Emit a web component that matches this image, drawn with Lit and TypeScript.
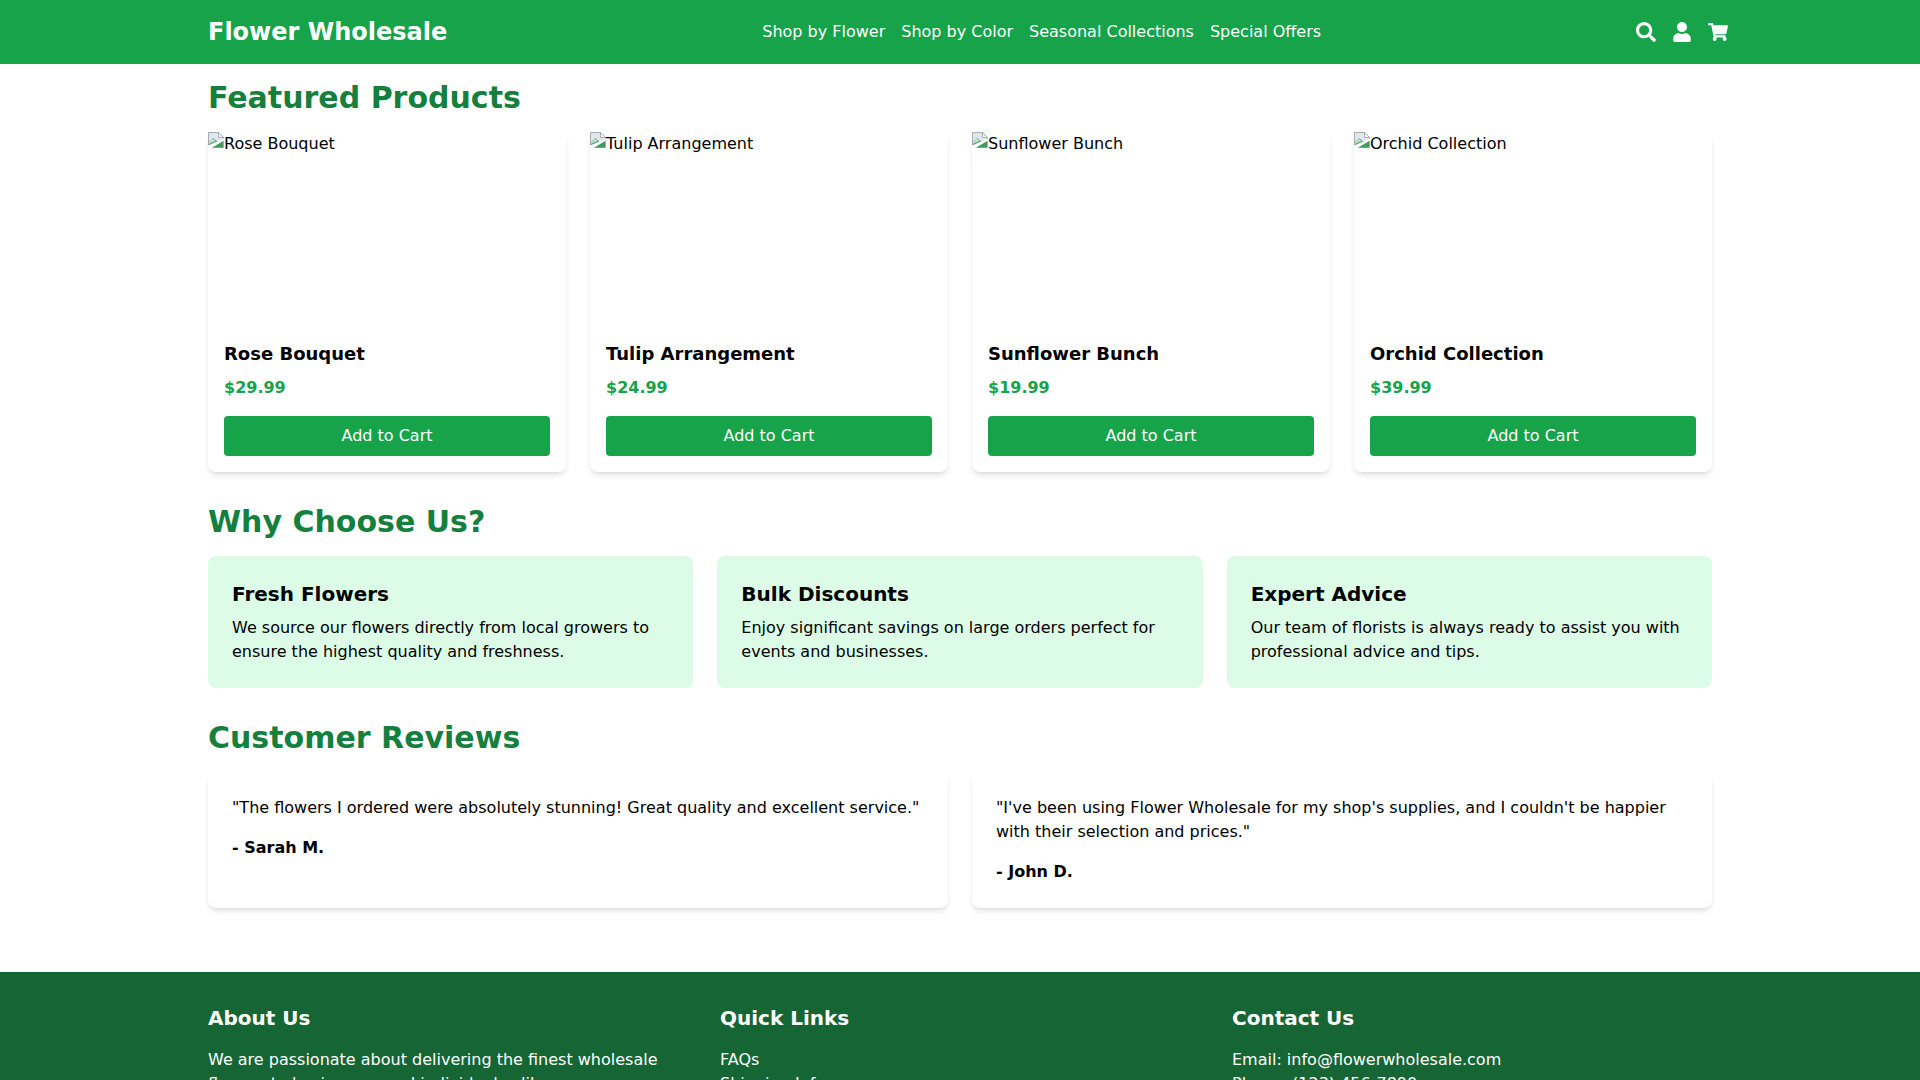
import { LitElement, html, css, svg } from "lit";
import { customElement } from "lit/decorators.js";

const products = [
  ["Rose Bouquet", "$29.99"],
  ["Tulip Arrangement", "$24.99"],
  ["Sunflower Bunch", "$19.99"],
  ["Orchid Collection", "$39.99"],
];
const features = [
  ["Fresh Flowers", "We source our flowers directly from local growers to ensure the highest quality and freshness."],
  ["Bulk Discounts", "Enjoy significant savings on large orders perfect for events and businesses."],
  ["Expert Advice", "Our team of florists is always ready to assist you with professional advice and tips."],
];
const reviews = [
  ['"The flowers I ordered were absolutely stunning! Great quality and excellent service."', "- Sarah M."],
  ['"I\'ve been using Flower Wholesale for my shop\'s supplies, and I couldn\'t be happier with their selection and prices."', "- John D."],
];

const brokenIcon = svg`<svg class="broken" width="16" height="16" viewBox="0 0 16 16">
  <path d="M0.5 0.5H10.5L15.5 5.5V15.5H0.5Z" fill="#dfe7ee" stroke="#a9adb2"/>
  <path d="M10.5 0.5V5.5H15.5Z" fill="#fff" stroke="#a9adb2"/>
  <path d="M1 15.5V10L5 6L10 10L15 8V15.5Z" fill="#3f9c5a"/>
  <path d="M0 13.5L16 6.5V8.5L3.5 16H0Z" fill="#fff"/>
  <path d="M1 12V9.5L4.5 6L8 9Z" fill="#bfd9c6"/>
</svg>`;

@customElement("app-root")
export class AppRoot extends LitElement {
  static styles = css`
    :host { display: block; font-family: "DejaVu Sans", sans-serif; font-size: 16px; line-height: 24px; color: #000; background: #fff; }
    * { box-sizing: border-box; }
    h2, h3, h4, p { margin: 0; }
    .header { background: #16a34a; color: #fff; height: 64px; }
    .header-inner { max-width: 1536px; height: 64px; margin: 0 auto; padding-left: 16px; display: flex; align-items: center; justify-content: space-between; }
    .logo { font-size: 24px; line-height: 32px; font-weight: 700; }
    .nav { display: flex; gap: 16px; }
    .icons { display: flex; gap: 16px; align-items: center; }
    .icons svg { display: block; width: 20px; height: 20px; fill: #fff; }
    .main { max-width: 1536px; margin: 0 auto; padding: 16px 16px; }
    .section { margin-bottom: 32px; }
    h2 { font-size: 30px; line-height: 36px; font-weight: 700; color: #15803d; margin-bottom: 16px; }
    .grid { display: grid; gap: 24px; }
    .g4 { grid-template-columns: repeat(4, 1fr); }
    .g3 { grid-template-columns: repeat(3, 1fr); }
    .g2 { grid-template-columns: repeat(2, 1fr); }
    .card { background: #fff; border-radius: 8px; box-shadow: 0 4px 6px -1px rgba(0,0,0,.1), 0 2px 4px -2px rgba(0,0,0,.1); }
    .img { height: 192px; display: block; }
    .broken { display: inline-block; vertical-align: 1px; }
    .card-body { padding: 16px; }
    .card-body h3 { font-size: 18px; line-height: 28px; font-weight: 700; margin-bottom: 8px; }
    .price { font-weight: 700; color: #16a34a; margin-bottom: 16px; }
    .btn { display: block; width: 100%; height: 40px; border: 0; border-radius: 4px; background: #16a34a; color: #fff; font: inherit; padding: 0; }
    .feature { background: #dcfce7; border-radius: 8px; padding: 24px; }
    .feature h3 { font-size: 20px; line-height: 28px; font-weight: 700; margin-bottom: 8px; }
    .review { padding: 24px; }
    .review p { margin-bottom: 16px; }
    .review .who { font-weight: 700; margin-bottom: 0; }
    .footer { background: #166534; color: #fff; margin-top: 16px; padding: 32px 0; }
    .footer-inner { max-width: 1536px; margin: 0 auto; padding: 0 16px; display: grid; grid-template-columns: repeat(3, 1fr); gap: 32px; }
    .footer h4 { font-size: 20px; line-height: 28px; font-weight: 700; margin-bottom: 16px; }
    .links { list-style: none; margin: 0; padding: 0; }
  `;

  render() {
    return html`
      <header class="header"><div class="header-inner">
        <div class="logo">Flower Wholesale</div>
        <nav class="nav"><span>Shop by Flower</span><span>Shop by Color</span><span>Seasonal Collections</span><span>Special Offers</span></nav>
        <div class="icons">
          <svg viewBox="0 0 512 512"><path d="M505 442.7L405.3 343c-4.5-4.5-10.6-7-17-7H372c27.6-35.3 44-79.7 44-128C416 93.1 322.9 0 208 0S0 93.1 0 208s93.1 208 208 208c48.3 0 92.7-16.4 128-44v16.3c0 6.4 2.5 12.5 7 17l99.7 99.7c9.4 9.4 24.6 9.4 33.9 0l28.3-28.3c9.4-9.4 9.4-24.6.1-34zM208 336c-70.7 0-128-57.2-128-128 0-70.7 57.2-128 128-128 70.7 0 128 57.2 128 128 0 70.7-57.2 128-128 128z"/></svg>
          <svg viewBox="0 0 448 512"><path d="M224 256c70.7 0 128-57.3 128-128S294.7 0 224 0 96 57.3 96 128s57.3 128 128 128zm89.6 32h-16.7c-22.2 10.2-46.9 16-72.9 16s-50.6-5.8-72.9-16h-16.7C60.2 288 0 348.2 0 422.4V464c0 26.5 21.5 48 48 48h352c26.5 0 48-21.5 48-48v-41.6c0-74.2-60.2-134.4-134.4-134.4z"/></svg>
          <svg viewBox="0 0 576 512"><path d="M528.12 301.319l47.273-208C578.806 78.301 567.391 64 551.99 64H159.208l-9.166-44.81C147.758 8.021 137.93 0 126.529 0H24C10.745 0 0 10.745 0 24v16c0 13.255 10.745 24 24 24h69.883l70.248 343.435C147.325 417.1 136 435.222 136 456c0 30.928 25.072 56 56 56s56-25.072 56-56c0-15.674-6.447-29.835-16.824-40h209.647C430.447 426.165 424 440.326 424 456c0 30.928 25.072 56 56 56s56-25.072 56-56c0-22.172-12.888-41.332-31.579-50.405l5.517-24.276c3.413-15.018-8.002-29.319-23.403-29.319H218.117l-6.545-32h293.145c11.206 0 20.92-7.754 23.403-18.681z"/></svg>
        </div>
      </div></header>
      <main class="main">
        <section class="section">
          <h2>Featured Products</h2>
          <div class="grid g4">
            ${products.map(([n, p]) => html`<div class="card">
              <div class="img">${brokenIcon}${n}</div>
              <div class="card-body"><h3>${n}</h3><p class="price">${p}</p><button class="btn">Add to Cart</button></div>
            </div>`)}
          </div>
        </section>
        <section class="section">
          <h2>Why Choose Us?</h2>
          <div class="grid g3">
            ${features.map(([t, d]) => html`<div class="feature"><h3>${t}</h3><p>${d}</p></div>`)}
          </div>
        </section>
        <section class="section">
          <h2>Customer Reviews</h2>
          <div class="grid g2">
            ${reviews.map(([t, w]) => html`<div class="card review"><p>${t}</p><p class="who">${w}</p></div>`)}
          </div>
        </section>
      </main>
      <footer class="footer"><div class="footer-inner">
        <div><h4>About Us</h4><p>We are passionate about delivering the finest wholesale flowers to businesses and individuals alike.</p></div>
        <div><h4>Quick Links</h4><ul class="links"><li>FAQs</li><li>Shipping Info</li><li>Returns</li><li>Contact Us</li></ul></div>
        <div><h4>Contact Us</h4><p>Email: info@flowerwholesale.com</p><p>Phone: (123) 456-7890</p></div>
      </div></footer>
    `;
  }
}
